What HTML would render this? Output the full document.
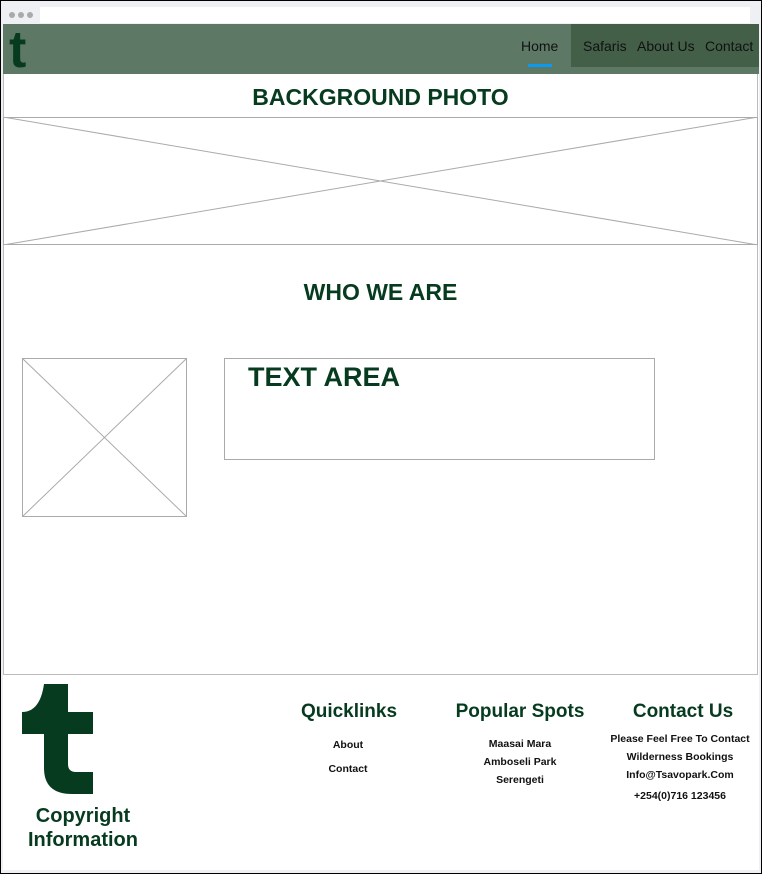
<!DOCTYPE html>
<html><head><meta charset="utf-8"><style>
*{margin:0;padding:0;box-sizing:border-box}
body{width:762px;height:874px;position:relative;overflow:hidden;background:#fff;font-family:"Liberation Sans",sans-serif;color:#073b1f}
.a{position:absolute}
.h{font-weight:bold;text-align:center}
.f{font-size:10.5px;font-weight:bold;color:#111;text-align:center;line-height:18px}
</style></head><body>
<div class="a" style="left:0;top:0;width:762px;height:874px;border:1px solid #000;background:#eef0f4"></div>
<div class="a" style="left:40px;top:7px;width:710px;height:16px;background:#fff"></div>
<div class="a" style="left:9px;top:12px;width:6px;height:6px;border-radius:3px;background:#aaa"></div>
<div class="a" style="left:18px;top:12px;width:6px;height:6px;border-radius:3px;background:#aaa"></div>
<div class="a" style="left:27px;top:12px;width:6px;height:6px;border-radius:3px;background:#aaa"></div>
<div class="a" style="left:3px;top:24px;width:756px;height:846px;background:#fff"></div>
<div class="a" style="left:3px;top:24px;width:756px;height:50px;background:#5e7866"></div>
<div class="a" style="left:571px;top:24px;width:188px;height:43px;background:#435f48"></div>
<div class="a" style="left:9px;top:24px;font-size:52px;font-weight:bold;line-height:52px">t</div>
<div class="a" style="left:521px;top:38px;font-size:14px;color:#111">Home</div>
<div class="a" style="left:528px;top:64px;width:24px;height:3px;background:#0a9af0"></div>
<div class="a" style="left:583px;top:38px;font-size:14px;color:#111">Safaris</div>
<div class="a" style="left:637px;top:38px;font-size:14px;color:#111">About Us</div>
<div class="a" style="left:705px;top:38px;font-size:14px;color:#111">Contact</div>
<div class="a" style="left:3px;top:74px;width:755px;height:601px;border:1px solid #bbb;border-top:none"></div>
<div class="a h" style="left:3px;top:84px;width:755px;font-size:23px">BACKGROUND PHOTO</div>
<svg class="a" style="left:3px;top:117px" width="755" height="128"><rect x=".5" y=".5" width="754" height="127" fill="none" stroke="#aaa"/><line x1="0" y1="0" x2="755" y2="128" stroke="#aaa"/><line x1="755" y1="0" x2="0" y2="128" stroke="#aaa"/></svg>
<div class="a h" style="left:3px;top:279px;width:755px;font-size:23px">WHO WE ARE</div>
<svg class="a" style="left:22px;top:358px" width="165" height="159"><rect x=".5" y=".5" width="164" height="158" fill="none" stroke="#aaa"/><line x1="0" y1="0" x2="165" y2="159" stroke="#aaa"/><line x1="165" y1="0" x2="0" y2="159" stroke="#aaa"/></svg>
<div class="a" style="left:224px;top:358px;width:431px;height:102px;border:1px solid #aaa"></div>
<div class="a" style="left:248px;top:362px;font-size:27px;font-weight:bold">TEXT AREA</div>
<svg class="a" style="left:22px;top:684px" width="74" height="112"><path d="M22 0H46V28H71V50H46V80Q46 88 54 88H71V110H50Q22 110 22 84V50H0V28Q18 28 22 0Z" fill="#073b1f"/></svg>
<div class="a" style="left:8px;top:804px;width:150px;text-align:center;font-size:20px;font-weight:bold;line-height:24px">Copyright<br>Information</div>
<div class="a h" style="left:289px;top:701px;width:120px;font-size:19px">Quicklinks</div>
<div class="a f" style="left:288px;top:733px;width:120px;line-height:24px">About<br>Contact</div>
<div class="a h" style="left:450px;top:701px;width:140px;font-size:19px">Popular Spots</div>
<div class="a f" style="left:450px;top:735px;width:140px">Maasai Mara<br>Amboseli Park<br>Serengeti</div>
<div class="a h" style="left:608px;top:701px;width:150px;font-size:19px">Contact Us</div>
<div class="a f" style="left:605px;top:730px;width:150px">Please Feel Free To Contact<br>Wilderness Bookings<br>Info@Tsavopark.Com<br><span style="line-height:24px">+254(0)716 123456</span></div>
</body></html>
